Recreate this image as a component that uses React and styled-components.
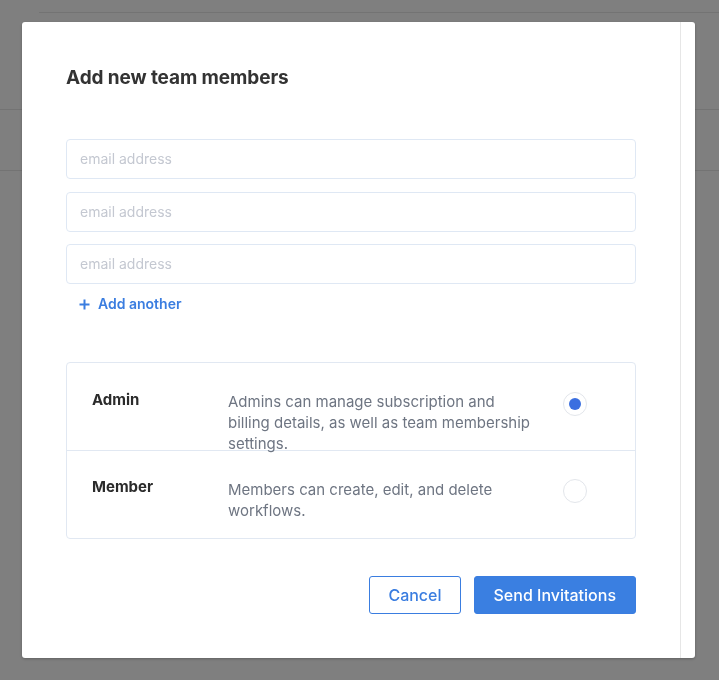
import React, { useState } from 'react';
import styled, { createGlobalStyle } from 'styled-components';

const GlobalStyle = createGlobalStyle`
  html, body {
    margin: 0;
    padding: 0;
    background: #ffffff;
    font-family: Inter, "Noto Sans", sans-serif;
  }
  * { box-sizing: border-box; }
`

// the page that sits under the dimmed overlay
const Page = styled.div`
  height: 680px;
  background: #ffffff;
`

const TopBar = styled.div`
  height: 13px;
  margin-left: 39px;
  border-bottom: 1px solid #e6e6e6;
`

const Section = styled.div`
  margin-top: 96px;
  height: 62px;
  border-top: 1px solid #e6e6e6;
  border-bottom: 1px solid #e6e6e6;
`

const Overlay = styled.div`
  position: fixed;
  inset: 0;
  background: rgba(0, 0, 0, 0.5);
  padding: 22px 24px 22px 22px;
  display: flex;
  align-items: flex-start;
`

const Modal = styled.div`
  width: 673px;
  height: 636px;
  background: #ffffff;
  border-radius: 3px;
  box-shadow: 0 1px 3px rgba(0, 0, 0, 0.25);
  display: grid;
  grid-template-columns: 1fr 15px;
  overflow: hidden;
`

const Gutter = styled.div`
  border-left: 1px solid #e6e6e6;
`

const Content = styled.div`
  padding: 44px 44px 0 44px;
  display: flex;
  flex-direction: column;
`

const Title = styled.h2`
  margin: 0;
  font-size: 19px;
  line-height: 24px;
  font-weight: 700;
  color: #333333;
  letter-spacing: -0.1px;
`

const Inputs = styled.div`
  margin-top: 49px;
  display: flex;
  flex-direction: column;
  gap: 12.5px;
`

const EmailInput = styled.input`
  height: 40px;
  width: 100%;
  border: 1px solid #dfe8f4;
  border-radius: 4px;
  padding: 0 13px 1px;
  font-family: Inter, sans-serif;
  font-size: 14px;
  color: #333333;
  outline: none;
  &::placeholder {
    color: #c4c8d1;
  }
`

const AddAnother = styled.button`
  margin-top: 12px;
  align-self: flex-start;
  display: flex;
  align-items: center;
  gap: 8px;
  background: none;
  border: 0;
  padding: 0 0 0 13px;
  color: #3a7de0;
  font-family: Inter, sans-serif;
  font-size: 14px;
  font-weight: 600;
  line-height: 16px;
  cursor: pointer;
`

const Roles = styled.div`
  margin-top: 50px;
  border: 1px solid #e1e8f2;
  border-radius: 4px;
`

const RoleRow = styled.label`
  height: ${p => (p.first ? '87px' : '88px')};
  display: grid;
  grid-template-columns: 136px 1fr 24px;
  align-items: start;
  padding: 28px 48px 0 25px;
  border-top: ${p => (p.first ? '0' : '1px solid #e1e8f2')};
  cursor: pointer;
`

const RoleName = styled.div`
  font-size: 15px;
  line-height: 15px;
  font-weight: 700;
  color: #2b2b2b;
  padding-top: ${p => (p.first ? '1px' : '0')};
`

const RoleDesc = styled.div`
  max-width: 312px;
  font-size: 15px;
  line-height: 21px;
  color: #6e7582;
`

const Radio = styled.span`
  width: 24px;
  height: 24px;
  margin-top: ${p => (p.first ? '1px' : '0')};
  border-radius: 50%;
  border: 1px solid #e3e6eb;
  background: #ffffff;
  display: flex;
  align-items: center;
  justify-content: center;
  &::after {
    content: '';
    width: 12px;
    height: 12px;
    border-radius: 50%;
    background: ${p => (p.checked ? '#3b6fe0' : 'transparent')};
  }
`

const Footer = styled.div`
  margin-top: 37px;
  display: flex;
  justify-content: flex-end;
  gap: 13px;
`

const Button = styled.button`
  height: 38px;
  padding: 0 ${p => (p.primary ? '19px' : '18px')};
  border-radius: 3px;
  border: 1px solid #3a7de0;
  background: ${p => (p.primary ? '#3a7fe1' : '#ffffff')};
  color: ${p => (p.primary ? '#ffffff' : '#3a7de0')};
  font-family: Inter, sans-serif;
  font-size: 16px;
  font-weight: 500;
  cursor: pointer;
`

const PlusIcon = () => (
  <svg width="11" height="11" viewBox="0 0 11 11">
    <path d="M5.5 0.5v10M0.5 5.5h10" stroke="#3a7de0" strokeWidth="2" fill="none" />
  </svg>
)

const roles = [
  {
    id: 'admin',
    name: 'Admin',
    desc: 'Admins can manage subscription and billing details, as well as team membership settings.'
  },
  {
    id: 'member',
    name: 'Member',
    desc: 'Members can create, edit, and delete workflows.'
  }
]

export default function App() {
  const [role, setRole] = useState('admin')
  return (
    <>
      <GlobalStyle />
      <Page>
        <TopBar />
        <Section />
      </Page>
      <Overlay>
        <Modal>
          <Content>
            <Title>Add new team members</Title>
            <Inputs>
              <EmailInput placeholder="email address" />
              <EmailInput placeholder="email address" />
              <EmailInput placeholder="email address" />
            </Inputs>
            <AddAnother>
              <PlusIcon />
              Add another
            </AddAnother>
            <Roles>
              {roles.map((r, i) => (
                <RoleRow key={r.id} first={i === 0} onClick={() => setRole(r.id)}>
                  <RoleName first={i === 0}>{r.name}</RoleName>
                  <RoleDesc>{r.desc}</RoleDesc>
                  <Radio first={i === 0} checked={role === r.id} />
                </RoleRow>
              ))}
            </Roles>
            <Footer>
              <Button>Cancel</Button>
              <Button primary>Send Invitations</Button>
            </Footer>
          </Content>
          <Gutter />
        </Modal>
      </Overlay>
    </>
  )
}
